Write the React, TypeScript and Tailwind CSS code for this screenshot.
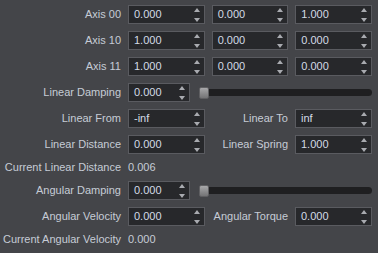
import React from "react";

const font = { fontFamily: '"Liberation Sans", Arial, sans-serif' };

function Arrows() {
	return (
		<div className="absolute right-[4px] top-0 bottom-0 flex flex-col justify-center gap-[6px]">
			<svg width="6" height="4" viewBox="0 0 6 4">
				<path d="M3 0 L6 4 L0 4 Z" fill="#a9abb0" />
			</svg>
			<svg width="6" height="4" viewBox="0 0 6 4">
				<path d="M0 0 L6 0 L3 4 Z" fill="#a9abb0" />
			</svg>
		</div>
	);
}

function Spin({ value, className = "" }: { value: string; className?: string }) {
	return (
		<div
			className={
				"relative h-[19px] border border-[#5a5b60] bg-[#27282b] flex items-center pl-[5px] text-[#d3dbe6] " +
				className
			}
		>
			<span className="leading-none">{value}</span>
			<Arrows />
		</div>
	);
}

function Label({ children }: { children: React.ReactNode }) {
	return <div className="w-[121px] shrink-0 text-right text-[#c6ccd6] whitespace-nowrap">{children}</div>;
}

function Row({ label, children }: { label: string; children: React.ReactNode }) {
	return (
		<div className="flex items-center h-[19px]">
			<Label>{label}</Label>
			<div className="ml-[7px] w-[244px] flex items-center">{children}</div>
		</div>
	);
}

function Triple({ label, values }: { label: string; values: string[] }) {
	return (
		<Row label={label}>
			<div className="grid grid-cols-3 gap-[7px] w-full">
				{values.map((v, i) => (
					<Spin key={i} value={v} />
				))}
			</div>
		</Row>
	);
}

function Pair({ l1, v1, l2, v2 }: { l1: string; v1: string; l2: string; v2: string }) {
	return (
		<Row label={l1}>
			<Spin value={v1} className="w-[77px] shrink-0" />
			<div className="flex-1 text-right pr-[7px] text-[#c6ccd6] whitespace-nowrap">{l2}</div>
			<Spin value={v2} className="w-[77px] shrink-0" />
		</Row>
	);
}

function Slider({ label, value }: { label: string; value: string }) {
	return (
		<Row label={label}>
			<Spin value={value} className="w-[62px] shrink-0" />
			<div className="relative flex-1 ml-[9px] h-[19px] flex items-center">
				<div className="w-full h-[7px] rounded-full bg-[#1f1f21]" />
				<div className="absolute left-0 top-[4px] w-[10px] h-[12px] rounded-[2px] border border-[#5f5f62] bg-gradient-to-b from-[#a8a8aa] to-[#747476]" />
			</div>
		</Row>
	);
}

function Info({ label, value }: { label: string; value: string }) {
	return (
		<div className="flex items-center h-[13px]">
			<Label>{label}</Label>
			<div className="ml-[7px] text-[#c6ccd6]">{value}</div>
		</div>
	);
}

export default function App() {
	return (
		<div className="w-[378px] h-[253px] bg-[#444549] text-[11px] overflow-hidden" style={font}>
			<div className="flex flex-col gap-[7px] pt-[5px]">
				<Triple label="Axis 00" values={["0.000", "0.000", "1.000"]} />
				<Triple label="Axis 10" values={["1.000", "0.000", "0.000"]} />
				<Triple label="Axis 11" values={["1.000", "0.000", "0.000"]} />
				<Slider label="Linear Damping" value="0.000" />
				<Pair l1="Linear From" v1="-inf" l2="Linear To" v2="inf" />
				<Pair l1="Linear Distance" v1="0.000" l2="Linear Spring" v2="1.000" />
				<Info label="Current Linear Distance" value="0.006" />
				<Slider label="Angular Damping" value="0.000" />
				<Pair l1="Angular Velocity" v1="0.000" l2="Angular Torque" v2="0.000" />
				<Info label="Current Angular Velocity" value="0.000" />
			</div>
		</div>
	);
}
